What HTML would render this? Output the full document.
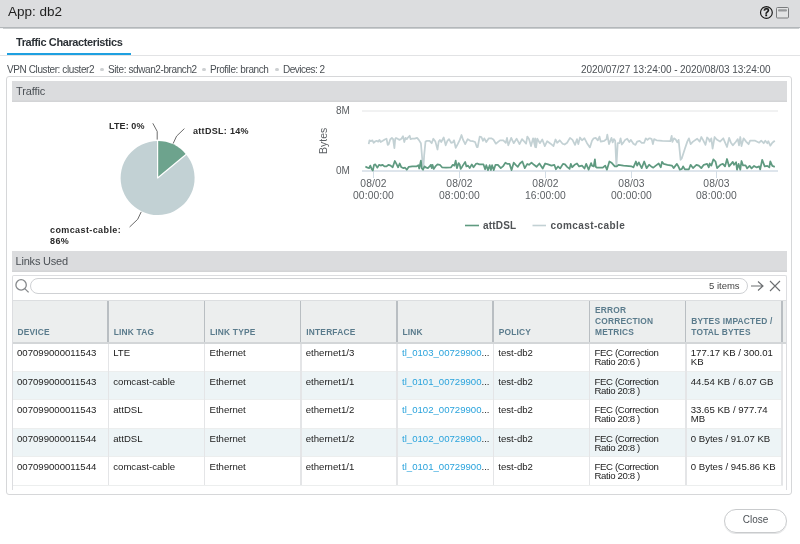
<!DOCTYPE html>
<html><head><meta charset="utf-8">
<style>
*{margin:0;padding:0;box-sizing:border-box}
html{background:#fff}body{will-change:transform;position:relative;width:800px;height:544px;overflow:hidden;background:#fff;font-family:"Liberation Sans",sans-serif;color:#333}
.a{position:absolute;white-space:nowrap}
#hdr{position:absolute;left:0;top:0;width:800px;height:28px;background:#dcdddf;border-bottom:1px solid #b3b7ba;box-shadow:0 0.6px 0.8px rgba(150,155,160,0.5)}
#title{left:8px;top:4.2px;font-size:13.5px;line-height:16px;color:#1e1e1e}
#tabtxt{left:16px;top:35.9px;font-size:11px;font-weight:bold;line-height:13px;color:#2c3136;letter-spacing:-0.4px}
#tabline{position:absolute;left:7px;top:53px;width:124px;height:2px;background:#1ea0e0}
#tabsep{position:absolute;left:0;top:55px;width:800px;height:1px;background:#e2e3e5}
.meta{top:64.2px;font-size:10px;line-height:11px;color:#4a4f54;letter-spacing:-0.4px}
.dot{position:absolute;width:3.5px;height:3.5px;border-radius:50%;background:#cdd0d2;top:67.8px}
.panel{position:absolute;left:6px;top:76px;width:786px;height:419px;border:1px solid #d6d7d9;border-radius:3px}
.sech{position:absolute;left:12px;width:775px;height:21.3px;background:#dbdcde;box-shadow:inset 0 -1.6px 0 #d3d4d6}
.sech span{position:absolute;left:4px;top:4.4px;font-size:11px;line-height:12px;color:#4b5055;letter-spacing:-0.1px}
.lbl{font-size:9px;font-weight:bold;line-height:11px;color:#2a2a2a}
.ax{font-size:10px;line-height:11.8px;color:#5b5f63}
.tk{width:80px;text-align:center;font-size:10.3px;letter-spacing:0.1px}
.leg{font-size:10px;font-weight:bold;line-height:12px;color:#505356}
.th{font-size:8.4px;font-weight:bold;letter-spacing:0.2px;line-height:11px;color:#5a7b8c;display:flex;flex-direction:column;justify-content:flex-end}
.td{font-size:9.6px;line-height:9.4px;color:#222}
</style></head><body>
<div id="hdr"></div>
<div class="a" id="title">App: db2</div>
<svg class="a" style="left:759px;top:5px" width="15" height="15" viewBox="0 0 15 15"><circle cx="7.4" cy="7.5" r="6.9" fill="#e9eaeb"/><circle cx="7.4" cy="7.5" r="5.9" fill="#dfe0e2" stroke="#1a1a1a" stroke-width="1.2"/><text x="7.4" y="11.4" font-family="Liberation Sans" font-weight="bold" font-size="10.5" text-anchor="middle" fill="#111" stroke="#111" stroke-width="0.3">?</text></svg>
<svg class="a" style="left:775px;top:6px" width="15" height="14" viewBox="0 0 15 14"><rect x="1.5" y="1.5" width="12" height="10.5" rx="1" fill="#e2e3e4" stroke="#7a7c7e" stroke-width="1"/><rect x="3" y="3.2" width="9" height="2.2" rx="1" fill="#97999b"/></svg>

<div class="a" id="tabtxt">Traffic Characteristics</div>
<div id="tabline"></div>
<div id="tabsep"></div>

<div class="a meta" style="left:7px">VPN Cluster: cluster2</div>
<div class="dot" style="left:100px"></div>
<div class="a meta" style="left:108px">Site: sdwan2-branch2</div>
<div class="dot" style="left:202px"></div>
<div class="a meta" style="left:210px">Profile: branch</div>
<div class="dot" style="left:275px"></div>
<div class="a meta" style="left:283px;letter-spacing:-0.5px">Devices: 2</div>
<div class="a meta" style="left:581px;letter-spacing:-0.07px">2020/07/27 13:24:00 - 2020/08/03 13:24:00</div>

<div class="panel"></div>
<div class="sech" style="top:81px"><span>Traffic</span></div>
<div class="sech" style="top:251px"><span style="left:3.5px;letter-spacing:-0.2px">Links Used</span></div>

<svg class="a" style="left:0;top:0" width="800" height="250" viewBox="0 0 800 250">
<path d="M157.6,178 L157.6,141 A37,37 0 1 0 186.1,154.4 Z" fill="#c2d1d4"/>
<path d="M157.6,178 L157.6,141 A37,37 0 0 1 186.1,154.4 Z" fill="#6da38d"/>
<path d="M157.6,178.5 L157.6,140.5 M157.6,178 L186.6,154" stroke="#fff" stroke-width="1.2" fill="none"/>
<polyline points="157.2,139.6 157.2,131.4 152.8,123.3" fill="none" stroke="#5a5a5a" stroke-width="0.9"/>
<polyline points="173.1,143.6 176.6,136.1 184.4,128.6" fill="none" stroke="#5a5a5a" stroke-width="0.9"/>
<polyline points="141.2,211.9 137.7,219.3 129.6,227" fill="none" stroke="#5a5a5a" stroke-width="0.9"/>
<line x1="362" y1="111" x2="778" y2="111" stroke="#e3e4e5" stroke-width="1"/>
<line x1="362" y1="171" x2="778" y2="171" stroke="#d3dde6" stroke-width="1.5"/>
<g stroke="#d3dde6" stroke-width="1"><line x1="373.5" y1="171" x2="373.5" y2="178"/><line x1="459.5" y1="171" x2="459.5" y2="178"/><line x1="545.5" y1="171" x2="545.5" y2="178"/><line x1="631.5" y1="171" x2="631.5" y2="178"/><line x1="716.5" y1="171" x2="716.5" y2="178"/></g>
<polyline points="368.7,144.1 369.5,140.3 370.8,141.2 372.4,140.3 373.7,142.8 374.9,141.6 376.6,140.8 378.2,141.6 379.5,139.9 380.7,142 382.8,140.8 384.8,139.5 386.5,138.7 387.7,144.9 388.6,144.5 390.2,139.5 391.9,137.9 393.1,139.1 394.4,148.2 395.2,139.1 396,137.9 398.1,139.1 399.7,139.9 401.4,138.7 403,136.2 404.3,142 405.5,137.9 406.8,139.1 408,137.5 409.7,135.8 410.5,139.1 412.2,138.7 414.6,138.7 417.1,137.9 418.8,139.9 420.9,143.2 422.6,163.1 423.4,168.1 424.2,154.8 425.5,141.6 427.1,140.8 429.6,140.8 431.7,143.2 433.3,138.7 435.4,141.6 437.5,149.5 438.7,141.6 439.9,139.9 441.2,142 443.7,137.5 445.7,145.3 447.4,140.8 449,139.1 451.1,142.8 452.8,142.4 454,140.3 455.7,147.8 457.7,144.1 459.8,139.9 461.5,135 463.1,139.9 465.2,144.1 467.7,139.1 470.2,140.8 472.6,141.2 475.1,142 476.8,147 477.7,147 479.7,136.6 481.4,137 483,140.8 484.3,138.3 486.3,142 488.8,138.3 491.3,138.3 493.4,139.5 495.9,143.7 497.5,142.4 500,140.3 503.3,140.3 505.8,142.8 507,137.9 508.3,145.3 511.2,137.9 513.7,143.2 516.6,138.7 519.5,144.1 522,139.1 523.6,140.8 526.1,143.7 527.3,136.6 529,139.1 531,146.1 533.1,138.3 535.2,147 535.2,138.3 536.1,147.4 537.3,138.7 539.8,143.2 542.3,139.5 544.8,146.1 547.2,141.2 550.6,143.7 553.5,146.1 555.5,139.5 557.2,142.8 559.7,140.3 562.6,143.7 564.6,144.5 567.1,142.8 570,137.9 572.5,139.9 575,144.9 577,139.1 578.3,144.1 580,137.5 582,140.3 584.5,138.3 587,143.2 589.9,147.4 592,140.8 593.7,138.3 595.7,137.9 597.8,140.3 599.5,136.6 600.7,141.6 604.4,140.8 606.5,139.1 607.3,134.6 609,144.1 611.5,137.9 612.7,142.4 613.9,139.1 615.2,140.8 616.4,166.4 617.7,143.2 619.3,143.2 620.6,138.3 621.8,144.5 623.5,142.4 625.1,139.9 627.2,138.7 629.3,142 630.9,139.9 633.4,143.7 635.5,144.9 637.1,141.6 639.6,140.8 641.7,142.8 644.2,142.8 645.8,138.3 647.5,139.9 649.1,138.3 650,138.3 651.7,139.1 652.9,144.1 654.1,139.1 656.6,140.3 662.4,140.8 670.3,141.2 671.7,135.8 672.4,142 674,138.3 675.7,139.5 677.3,142.4 678.6,139.9 680.6,159.8 681.9,158.1 684.8,149 687.3,141.6 688.9,138.3 690.6,144.1 693,141.6 697.2,138.7 699.7,141.6 701.3,137 703,139.9 705.5,144.9 707.1,137.5 708.8,139.1 709.7,141.6 711.3,138.3 712.6,148.6 714.6,137 716.7,139.5 720,141.6 723.3,138.3 725,142.4 727,147 729.1,137.9 730.8,142.4 732.8,145.3 735.7,142 737.8,139.1 739,145.3 740.3,137 741.5,146.1 743.6,138.3 746.1,141.6 748.6,144.2 750.1,140.7 755.2,140.7 759.2,142.7 761.2,140.7 763.7,143.2 765.3,140.7 767.3,143.2 768.3,141.2 770.3,145.7 772.3,142.7 774.8,140.7" fill="none" stroke="#c3d1d4" stroke-width="1.75" stroke-linejoin="round"/>
<polyline points="365.4,166.4 367.5,167.7 369.1,168.1 370.3,165.6 371.6,168.9 372.8,170.6 374.1,164.8 375.3,164.4 377.4,167.7 379,164.8 381.1,165.6 382.4,164.8 384.4,166.4 386.5,166.4 388.6,164.8 390.6,165.6 392.7,167.3 394.8,161 396.4,163.9 398.1,167.3 399.7,163.5 401.4,167.3 403.5,168.1 405.1,167.7 406.8,169.7 408.8,166.8 412.2,166.4 416.3,166.4 418.4,165.2 419.2,168.5 420.9,160.6 421.7,168.1 423,169.7 424.6,166.4 426.3,167.7 427.9,168.1 429.6,166.4 430.8,164.8 431.7,168.1 432.5,164.8 433.7,168.9 435.4,166.4 437.5,164.4 439.9,164.8 442,167.3 446.1,167.7 451.1,167.3 452.8,164.8 454.4,165.6 455.7,160.6 456.9,168.1 458.6,163.1 459.8,164.8 460.6,168.9 462.3,166.4 465.2,161.9 466.4,166.4 468.1,165.6 469.7,168.1 471.8,164.4 473.5,167.3 475.9,163.9 477.2,163.5 479.3,164.4 483.5,164.4 485.1,169.3 486.3,165.2 488,170.1 489.7,165.2 490.9,170.1 492.1,165.2 493.8,170.1 495.5,164.8 497.9,164.8 500.8,168.1 502.9,166.4 505.4,162.7 507.5,163.9 509.5,163.9 511.6,170.1 513.7,162.7 515.7,164.8 517.8,166.8 519.9,163.5 522.4,161.5 524.8,168.1 527.3,163.9 529,164.8 531.5,162.7 534,164.8 536.5,166.8 539.4,163.5 542.7,168.5 545.2,163.5 548.1,164.4 551.4,165.6 554.3,164.8 555.9,169.3 558,166.4 560.1,168.5 563,163.9 565,164.4 567.1,166.8 569.6,168.9 570.8,163.9 572.1,167.3 574.6,164.8 577,163.5 579.1,166.4 582,165.6 584.5,168.5 586.2,163.9 588.6,169.7 591.1,163.1 592,165.6 593.7,166.4 594.9,159.4 595.7,166.8 597,167.7 602.8,167.7 605.2,165.6 606.9,169.7 609.4,161.5 611.9,163.1 614.8,166.4 616.8,166.4 618.5,164.8 623.5,165.6 631.7,166.4 633.4,167.3 635.9,161.5 637.1,165.6 638.8,162.3 641.7,168.1 644.2,161.5 646.6,168.1 649.1,164.8 651.2,166.4 653.3,167.7 655.8,165.6 658.7,163.5 660.8,167.3 662,161.9 663.7,163.9 667.4,164.8 671.9,165.6 673.6,168.1 676.9,163.9 678.6,166.8 679.8,169.7 681.9,168.9 683.1,166.4 684.8,169.3 688.9,169.3 690.6,164.8 693,168.1 696.4,164.8 698.8,165.6 701.3,168.1 703.8,164.8 707.1,163.9 708.8,167.3 709.7,163.5 711.3,165.6 713.4,159.4 715.5,161.5 717.1,168.1 720.4,164.8 722.9,163.9 725,166.4 727,159 729.1,166.4 732.8,161.9 734.1,164.8 736.1,162.3 737,169.7 738.6,163.9 740.3,169.7 741.5,161 743,165.4 745.6,165.4 747.1,168.4 749.6,165.9 751.6,168.4 754.1,165.9 756.7,167.4 759.2,166.4 760.2,169.4 762.2,159.8 764.7,166.4 767.3,165.9 769.3,167.4 770.3,161.4 772.3,165.9 774.8,166.9" fill="none" stroke="#5f9a80" stroke-width="1.75" stroke-linejoin="round"/>
<line x1="465" y1="225.5" x2="479" y2="225.5" stroke="#5f9a80" stroke-width="1.6"/>
<line x1="532.5" y1="225.5" x2="546" y2="225.5" stroke="#c2d1d4" stroke-width="1.6"/>
</svg>
<div class="a lbl" style="left:109px;top:120.8px;letter-spacing:0.1px">LTE: 0%</div>
<div class="a lbl" style="left:193px;top:125.8px;letter-spacing:0.3px">attDSL: 14%</div>
<div class="a lbl" style="left:50px;top:224.8px;line-height:11.6px;letter-spacing:0.4px">comcast-cable:<br>86%</div>
<div class="a ax" style="left:336px;top:105.3px">8M</div>
<div class="a ax" style="left:336px;top:164.8px">0M</div>
<div class="a ax" style="left:311px;top:135px;font-size:10.5px;transform:rotate(-90deg);transform-origin:center">Bytes</div>
<div class="a ax tk" style="left:333.5px;top:178px">08/02<br>00:00:00</div>
<div class="a ax tk" style="left:419.5px;top:178px">08/02<br>08:00:00</div>
<div class="a ax tk" style="left:505.5px;top:178px">08/02<br>16:00:00</div>
<div class="a ax tk" style="left:591.5px;top:178px">08/03<br>00:00:00</div>
<div class="a ax tk" style="left:676.5px;top:178px">08/03<br>08:00:00</div>
<div class="a leg" style="left:483px;top:220px;letter-spacing:0.2px">attDSL</div>
<div class="a leg" style="left:550.5px;top:220px;letter-spacing:0.4px">comcast-cable</div>

<!--TABLE-->
<svg class="a" style="left:13.5px;top:278px" width="17" height="17" viewBox="0 0 17 17"><circle cx="7.1" cy="6.9" r="5.2" fill="none" stroke="#85888b" stroke-width="1.3"/><line x1="10.8" y1="10.6" x2="14.6" y2="14.4" stroke="#85888b" stroke-width="1.3"/></svg>
<div class="a" style="left:30px;top:278px;width:718px;height:16px;border:1px solid #cfd1d4;border-radius:9px"></div>
<div class="a" style="left:709px;top:278.5px;font-size:9.5px;line-height:13px;color:#444">5 items</div>
<svg class="a" style="left:749px;top:279px" width="34" height="14" viewBox="0 0 34 14"><path d="M2,7 H14 M9,2.5 L14,7 L9,11.5" fill="none" stroke="#6b6e71" stroke-width="1.1"/><path d="M21,2 L31,12 M31,2 L21,12" fill="none" stroke="#6b6e71" stroke-width="1.1"/></svg>
<div class="a" style="left:12px;top:300px;width:774px;height:43.5px;background:#eceeee;border-top:1px solid #dcdee0;border-bottom:2px solid #d3d6d8"></div>
<div class="a th" style="left:17.50px;top:302.5px;height:35px">DEVICE</div>
<div class="a th" style="left:113.75px;top:302.5px;height:35px">LINK TAG</div>
<div class="a th" style="left:210.00px;top:302.5px;height:35px">LINK TYPE</div>
<div class="a th" style="left:306.25px;top:302.5px;height:35px">INTERFACE</div>
<div class="a th" style="left:402.50px;top:302.5px;height:35px">LINK</div>
<div class="a th" style="left:498.75px;top:302.5px;height:35px">POLICY</div>
<div class="a th" style="left:595.00px;top:302.5px;height:35px">ERROR<br>CORRECTION<br>METRICS</div>
<div class="a th" style="left:691.25px;top:302.5px;height:35px">BYTES IMPACTED /<br>TOTAL BYTES</div>
<div class="a" style="left:107.25px;top:301px;width:1.5px;height:40.5px;background:#b9bec2"></div>
<div class="a" style="left:203.50px;top:301px;width:1.5px;height:40.5px;background:#b9bec2"></div>
<div class="a" style="left:299.75px;top:301px;width:1.5px;height:40.5px;background:#b9bec2"></div>
<div class="a" style="left:396.00px;top:301px;width:1.5px;height:40.5px;background:#b9bec2"></div>
<div class="a" style="left:492.25px;top:301px;width:1.5px;height:40.5px;background:#b9bec2"></div>
<div class="a" style="left:588.50px;top:301px;width:1.5px;height:40.5px;background:#b9bec2"></div>
<div class="a" style="left:684.75px;top:301px;width:1.5px;height:40.5px;background:#b9bec2"></div>
<div class="a" style="left:781.00px;top:301px;width:1.5px;height:40.5px;background:#b9bec2"></div>
<div class="a" style="left:12px;top:343.50px;width:770.5px;height:28.70px;background:#fff;border-bottom:1px solid #eceeee"></div>
<div class="a td" style="left:17.00px;top:348.00px">007099000011543</div>
<div class="a td" style="left:113.25px;top:348.00px">LTE</div>
<div class="a td" style="left:209.50px;top:348.00px">Ethernet</div>
<div class="a td" style="left:305.75px;top:348.00px">ethernet1/3</div>
<div class="a td" style="left:402.00px;top:348.00px"><span style="color:#2aa3dc">tl_0103_00729900</span>...</div>
<div class="a td" style="left:498.25px;top:348.00px">test-db2</div>
<div class="a td" style="left:594.50px;top:348.00px;letter-spacing:-0.35px">FEC (Correction<br>Ratio 20:6 )</div>
<div class="a td" style="left:690.75px;top:348.00px">177.17 KB / 300.01<br>KB</div>
<div class="a" style="left:12px;top:372.20px;width:770.5px;height:28.30px;background:#edf4f6;border-bottom:1px solid #eceeee"></div>
<div class="a td" style="left:17.00px;top:376.70px">007099000011543</div>
<div class="a td" style="left:113.25px;top:376.70px">comcast-cable</div>
<div class="a td" style="left:209.50px;top:376.70px">Ethernet</div>
<div class="a td" style="left:305.75px;top:376.70px">ethernet1/1</div>
<div class="a td" style="left:402.00px;top:376.70px"><span style="color:#2aa3dc">tl_0101_00729900</span>...</div>
<div class="a td" style="left:498.25px;top:376.70px">test-db2</div>
<div class="a td" style="left:594.50px;top:376.70px;letter-spacing:-0.35px">FEC (Correction<br>Ratio 20:8 )</div>
<div class="a td" style="left:690.75px;top:376.70px">44.54 KB / 6.07 GB</div>
<div class="a" style="left:12px;top:400.50px;width:770.5px;height:28.50px;background:#fff;border-bottom:1px solid #eceeee"></div>
<div class="a td" style="left:17.00px;top:405.00px">007099000011543</div>
<div class="a td" style="left:113.25px;top:405.00px">attDSL</div>
<div class="a td" style="left:209.50px;top:405.00px">Ethernet</div>
<div class="a td" style="left:305.75px;top:405.00px">ethernet1/2</div>
<div class="a td" style="left:402.00px;top:405.00px"><span style="color:#2aa3dc">tl_0102_00729900</span>...</div>
<div class="a td" style="left:498.25px;top:405.00px">test-db2</div>
<div class="a td" style="left:594.50px;top:405.00px;letter-spacing:-0.35px">FEC (Correction<br>Ratio 20:8 )</div>
<div class="a td" style="left:690.75px;top:405.00px">33.65 KB / 977.74<br>MB</div>
<div class="a" style="left:12px;top:429.00px;width:770.5px;height:28.20px;background:#edf4f6;border-bottom:1px solid #eceeee"></div>
<div class="a td" style="left:17.00px;top:433.50px">007099000011544</div>
<div class="a td" style="left:113.25px;top:433.50px">attDSL</div>
<div class="a td" style="left:209.50px;top:433.50px">Ethernet</div>
<div class="a td" style="left:305.75px;top:433.50px">ethernet1/2</div>
<div class="a td" style="left:402.00px;top:433.50px"><span style="color:#2aa3dc">tl_0102_00729900</span>...</div>
<div class="a td" style="left:498.25px;top:433.50px">test-db2</div>
<div class="a td" style="left:594.50px;top:433.50px;letter-spacing:-0.35px">FEC (Correction<br>Ratio 20:8 )</div>
<div class="a td" style="left:690.75px;top:433.50px">0 Bytes / 91.07 KB</div>
<div class="a" style="left:12px;top:457.20px;width:770.5px;height:28.40px;background:#fff;border-bottom:1px solid #eceeee"></div>
<div class="a td" style="left:17.00px;top:461.70px">007099000011544</div>
<div class="a td" style="left:113.25px;top:461.70px">comcast-cable</div>
<div class="a td" style="left:209.50px;top:461.70px">Ethernet</div>
<div class="a td" style="left:305.75px;top:461.70px">ethernet1/1</div>
<div class="a td" style="left:402.00px;top:461.70px"><span style="color:#2aa3dc">tl_0101_00729900</span>...</div>
<div class="a td" style="left:498.25px;top:461.70px">test-db2</div>
<div class="a td" style="left:594.50px;top:461.70px;letter-spacing:-0.35px">FEC (Correction<br>Ratio 20:8 )</div>
<div class="a td" style="left:690.75px;top:461.70px">0 Bytes / 945.86 KB</div>
<div class="a" style="left:107.50px;top:343.5px;width:1.5px;height:141.5px;background:#e4e5e7"></div>
<div class="a" style="left:203.75px;top:343.5px;width:1.5px;height:141.5px;background:#e4e5e7"></div>
<div class="a" style="left:300.00px;top:343.5px;width:1.5px;height:141.5px;background:#e4e5e7"></div>
<div class="a" style="left:396.25px;top:343.5px;width:1.5px;height:141.5px;background:#e4e5e7"></div>
<div class="a" style="left:492.50px;top:343.5px;width:1.5px;height:141.5px;background:#e4e5e7"></div>
<div class="a" style="left:588.75px;top:343.5px;width:1.5px;height:141.5px;background:#e4e5e7"></div>
<div class="a" style="left:685.00px;top:343.5px;width:1.5px;height:141.5px;background:#e4e5e7"></div>
<div class="a" style="left:781.25px;top:343.5px;width:1.5px;height:141.5px;background:#e4e5e7"></div>
<div class="a" style="left:11.5px;top:275px;width:775.5px;height:215px;border:1px solid #dcdde0;border-bottom:none;border-radius:2px 2px 0 0"></div>
<!--/TABLE-->

<div class="a" style="left:723.7px;top:509px;width:63.8px;height:23.5px;border:1px solid #c9cbcd;border-radius:12px;box-shadow:0 1px 0 #e3e4e5;font-size:10px;line-height:20.3px;text-align:center;color:#4c5156">Close</div>
</body></html>
